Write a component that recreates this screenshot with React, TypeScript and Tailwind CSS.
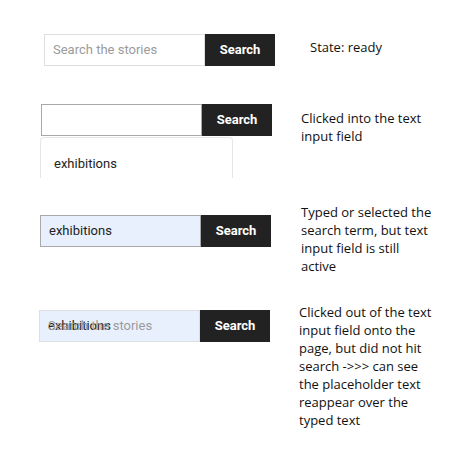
import React from "react";

// Search field states, with a note beside each one.

type BoxProps = {
  value?: string;
  placeholder?: string;
  ghost?: boolean;
  filled?: boolean;
  focused?: boolean;
};

function SearchBox({ value, placeholder, ghost, filled, focused }: BoxProps) {
  const border = focused ? "border-[#a9a9a9]" : "border-[#dedede]";
  const bg = filled ? "bg-[#e8f0fe]" : "bg-white";
  return (
    <div className="flex h-[32px] font-['Roboto',sans-serif]">
      <div className={`relative flex w-[161px] items-center border ${border} ${bg} pl-[8px] text-[13px]`}>
        {value && <span className="text-[#222]">{value}</span>}
        {placeholder && (
          <span className={`text-[#9b9b9b] ${ghost ? "absolute left-[8px]" : ""}`}>{placeholder}</span>
        )}
      </div>
      <button className="w-[70px] bg-[#222] text-[13px] font-bold text-white">Search</button>
    </div>
  );
}

// each note keeps its own line breaks
function Note({ lines }: { lines: string[] }) {
  return (
    <p className="whitespace-nowrap font-['Open_Sans',sans-serif] text-[13px] leading-[18px] text-[#111]">
      {lines.map((l) => (
        <span key={l} className="block">
          {l}
        </span>
      ))}
    </p>
  );
}

export default function App() {
  return (
    <div className="h-[462px] w-[476px] bg-white pt-[34px]">
      <div className="flex h-[70px] pl-[44px]">
        <SearchBox placeholder="Search the stories" />
        <div className="ml-[35px] mt-[4px]">
          <Note lines={["State: ready"]} />
        </div>
      </div>

      <div className="flex h-[99px] pl-[41px]">
        <div className="w-[231px]">
          <SearchBox focused />
          <div className="mt-[1px] h-[41px] w-[193px] -ml-[1px] rounded-t-[4px] border-x border-t border-[#e6e6e6] pl-[13px] pt-[16px] font-['Roboto',sans-serif] text-[13px] text-[#222]">
            exhibitions
          </div>
        </div>
        <div className="ml-[29px] mt-[5px]">
          <Note lines={["Clicked into the text", "input field"]} />
        </div>
      </div>

      <div className="flex h-[100px] pl-[40px]">
        <div className="mt-[12px]">
          <SearchBox value="exhibitions" filled focused />
        </div>
        <div className="ml-[30px]">
          <Note
            lines={["Typed or selected the", "search term, but text", "input field is still", "active"]}
          />
        </div>
      </div>

      <div className="flex pl-[39px]">
        <div className="mt-[7px]">
          <SearchBox value="exhibitions" placeholder="Search the stories" filled ghost />
        </div>
        <div className="ml-[29px]">
          <Note
            lines={[
              "Clicked out of the text",
              "input field onto the",
              "page, but did not hit",
              "search ->>> can see",
              "the placeholder text",
              "reappear over the",
              "typed text",
            ]}
          />
        </div>
      </div>
    </div>
  );
}
